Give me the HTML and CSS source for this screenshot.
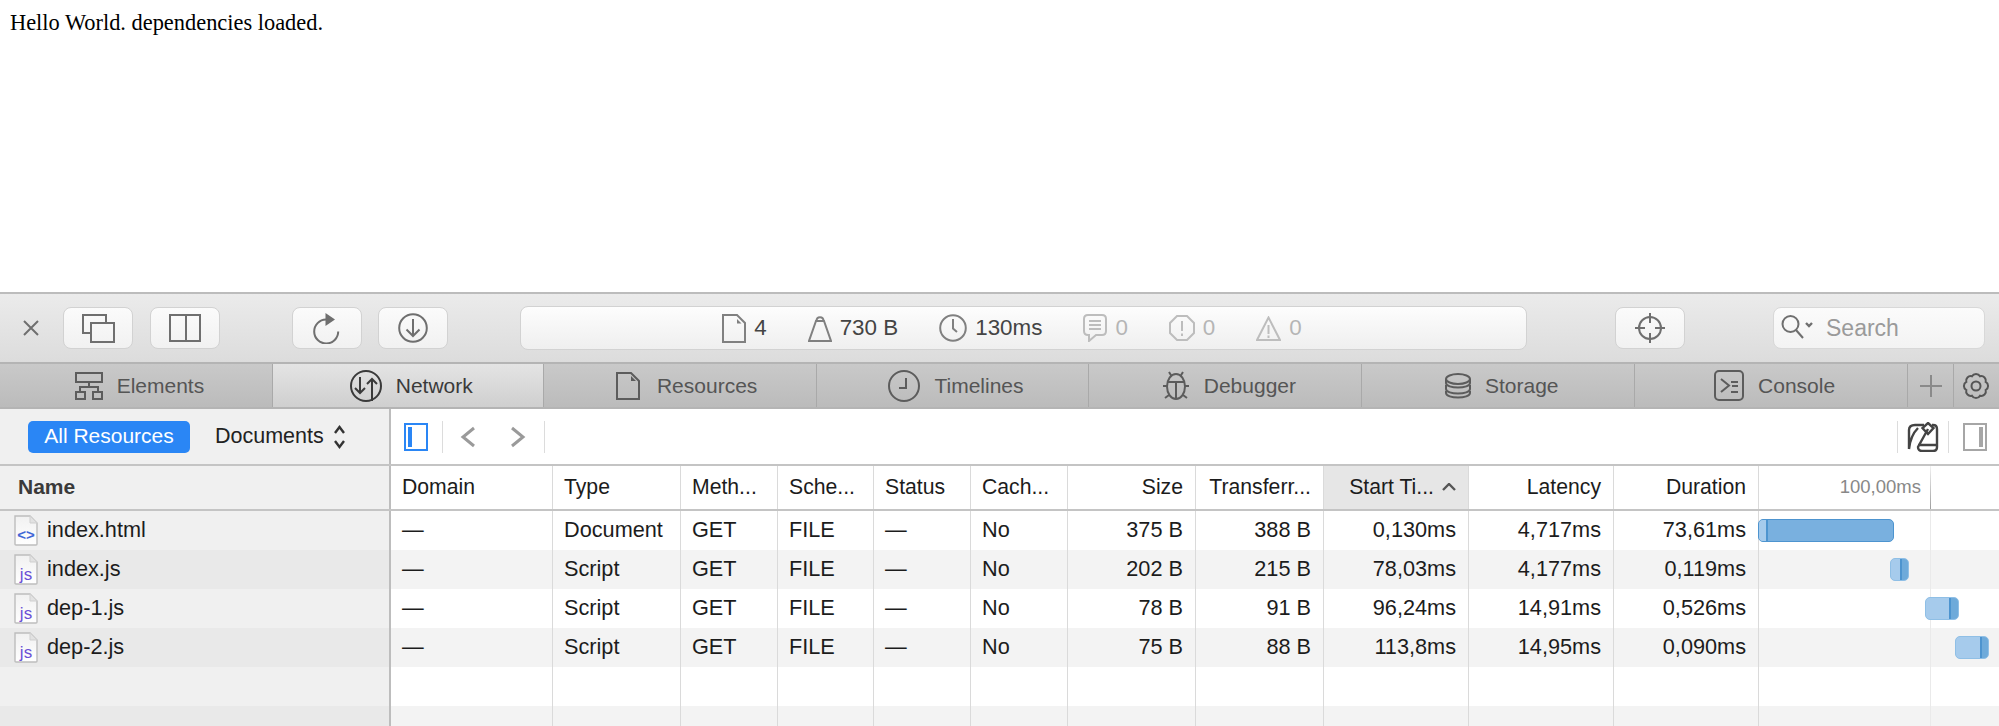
FILE: index.html
```html
<!DOCTYPE html>
<html lang="en">
<head>
    <meta charset="UTF-8">
    <title>Network</title>
    <link rel="stylesheet" href="styles.css">
</head>
<body>
    <div class="page">Hello World. dependencies loaded.</div>
    <div class="inspector">
        <div class="toolbar">
            <svg class="ico close" width="18" height="18" viewBox="0 0 18 18"><path d="M2 2 16 16M16 2 2 16"/></svg>
            <button class="tool first"><svg class="ico" width="33" height="29" viewBox="0 0 33 29"><path d="M9 19H1V1H24V9"/><path d="M9 9H32V28H9Z"/></svg></button>
            <button class="tool"><svg class="ico" width="32" height="28" viewBox="0 0 32 28"><path d="M1 1H31V27H1ZM17 1V27"/></svg></button>
            <button class="tool wide-gap"><svg class="ico" width="30" height="32" viewBox="0 0 30 32"><path d="M14 7.500A12 12 0 1 0 26.200 19.500"/><path class="fill" d="M13.500 1 23 7.500 13.500 14Z"/></svg></button>
            <button class="tool"><svg class="ico" width="30" height="30" viewBox="0 0 30 30"><circle cx="15" cy="15" r="13.800"/><path d="M15 6V23M8.500 16.500 15 23 21.500 16.500"/></svg></button>
            <div class="dashboard">
                <span class="stat"><svg class="ico" width="24" height="29" viewBox="0 0 24 29"><path d="M1 1H15L23 9V28H1Z"/><path class="fill thin" d="M15 5 19.500 9.500H15Z"/></svg>4</span>
                <span class="stat"><svg class="ico" width="24" height="27" viewBox="0 0 24 27"><path d="M8 6H16L23 26H1Z"/><path d="M8.500 6C8.500 1 15.500 1 15.500 6"/></svg>730 B</span>
                <span class="stat"><svg class="ico" width="28" height="28" viewBox="0 0 28 28"><circle cx="14" cy="14" r="12.800"/><path d="M14 5V14.500L18 18"/></svg>130ms</span>
                <span class="stat off"><svg class="ico" width="24" height="28" viewBox="0 0 24 28"><path d="M5 1H19Q23 1 23 5V17Q23 21 19 21H13L6 27V21H5Q1 21 1 17V5Q1 1 5 1Z"/><path d="M6 7H18M6 11H18M6 15H18"/></svg>0</span>
                <span class="stat off"><svg class="ico" width="26" height="26" viewBox="0 0 26 26"><path d="M8 1H18L25 8V18L18 25H8L1 18V8Z"/><path d="M13 6V16M13 18.500V21"/></svg>0</span>
                <span class="stat off"><svg class="ico" width="25" height="25" viewBox="0 0 25 25"><path d="M12.500 1.500 24 24H1Z"/><path d="M12.500 9V18M12.500 19.500V22"/></svg>0</span>
            </div>
            <button class="tool dash-gap"><svg class="ico" width="32" height="32" viewBox="0 0 32 32"><circle cx="16" cy="16" r="11"/><path d="M16 1V11M16 21V31M1 16H11M21 16H31"/></svg></button>
            <label class="search dash-gap">
                <svg class="ico" width="32" height="28" viewBox="0 0 32 28"><circle cx="9.500" cy="10" r="8"/><path d="M15 16 22 24"/><path class="thick" d="M25 9 28 12 31 9"/></svg>
                <span>Search</span>
            </label>
        </div>
        <div class="tabs">
            <div class="tab"><svg class="ico" width="28" height="28" viewBox="0 0 28 28"><path d="M1 1H27V10H1ZM14 10V15M5 20V15H23V20M1 20H10V27H1ZM18 20H27V27H18Z"/></svg>Elements</div>
            <div class="tab current"><svg class="ico" width="32" height="32" viewBox="0 0 32 32"><circle cx="16" cy="16" r="15"/><path d="M10 7V23M5 18 10 23 15 18M22 31V9M17 14 22 9 27 14"/></svg>Network</div>
            <div class="tab doc"><svg class="ico" width="24" height="28" viewBox="0 0 24 28"><path d="M1 1H15L23 9V27H1Z"/><path class="fill thin" d="M15 4 20 9H15Z"/></svg>Resources</div>
            <div class="tab"><svg class="ico" width="32" height="32" viewBox="0 0 32 32"><circle cx="16" cy="16" r="15"/><path d="M18 8V18H11"/></svg>Timelines</div>
            <div class="tab"><svg class="ico" width="28" height="30" viewBox="0 0 28 30"><ellipse cx="14" cy="15.500" rx="9" ry="12.500"/><path d="M5.500 11H22.500M14 11V28M7 1 9.500 5M21 1 18.500 5M1 15H5M23 15H27M3 27 7 24M25 27 21 24"/></svg>Debugger</div>
            <div class="tab"><svg class="ico" width="26" height="26" viewBox="0 0 26 26"><ellipse cx="13" cy="6" rx="12" ry="5"/><path d="M1 6V10C1 16 25 16 25 10V6M1 12V16C1 22 25 22 25 16V12M1 18V20C1 26 25 26 25 20V18"/></svg>Storage</div>
            <div class="tab"><svg class="ico" width="30" height="31" viewBox="0 0 30 31"><rect x="1" y="1" width="28" height="29" rx="4"/><path d="M7 9 15 15.500 7 22M17 12H24M18 16H24M17 22H24"/></svg>Console</div>
            <div class="tab-btn plus"><svg class="ico" width="24" height="24" viewBox="0 0 24 24"><path d="M12 1V23M1 12H23"/></svg></div>
            <div class="tab-btn"><svg class="ico" width="28" height="28" viewBox="2 2 28 28"><path d="M25.700 11.980A4.600 4.600 0 0 1 25.700 20.020A4.600 4.600 0 0 1 20.020 25.700A4.600 4.600 0 0 1 11.980 25.700A4.600 4.600 0 0 1 6.300 20.020A4.600 4.600 0 0 1 6.300 11.980A4.600 4.600 0 0 1 11.980 6.300A4.600 4.600 0 0 1 20.020 6.300A4.600 4.600 0 0 1 25.700 11.980Z"/><circle cx="16" cy="16" r="4.500"/></svg></div>
        </div>
        <div class="filter">
            <div class="filter-left">
                <span class="pill">All Resources</span>
                <span class="scope">Documents<svg class="ico" width="11" height="24" viewBox="0 0 11 24"><path class="thick" d="M1 8 5.500 2 10 8M1 16 5.500 22 10 16"/></svg></span>
            </div>
            <div class="filter-right">
                <svg class="ico blue" width="24" height="28" viewBox="0 0 24 28"><path d="M1 1H23V27H1Z"/><path class="fill" d="M4 4H8V24H4Z"/></svg>
                <i class="divider"></i>
                <svg class="ico nav" width="16" height="22" viewBox="0 0 16 22"><path d="M14 2 3 11 14 20"/></svg>
                <svg class="ico nav next" width="16" height="22" viewBox="0 0 16 22"><path d="M2 2 13 11 2 20"/></svg>
                <i class="divider"></i>
                <i class="push"></i>
                <i class="divider"></i>
                <svg class="ico dark" width="32" height="30" viewBox="0 0 32 30"><path d="M2 27V8Q2 3 8 3H17M25 3H26Q30 3 30 7V25Q30 29 26 29H15Q11 29 11 25L21 7M11 23H30M2 27C3 18 6 11 11 6"/><path d="M21 1 26.500 6 21 12 15.500 6Z"/></svg>
                <i class="divider"></i>
                <svg class="ico soft" width="24" height="28" viewBox="0 0 24 28"><path d="M1 1H23V27H1Z"/><path class="fill" d="M16 4H20V24H16Z"/></svg>
            </div>
        </div>
        <div class="grid">
            <div class="row head">
                <div class="cell name"><b>Name</b></div>
                <div class="cell">Domain</div>
                <div class="cell">Type</div>
                <div class="cell">Meth...</div>
                <div class="cell">Sche...</div>
                <div class="cell">Status</div>
                <div class="cell">Cach...</div>
                <div class="cell num">Size</div>
                <div class="cell num">Transferr...</div>
                <div class="cell num sorted">Start Ti...<svg class="ico" width="14" height="8" viewBox="0 0 14 8"><path class="thick" d="M1 7 7 1 13 7"/></svg></div>
                <div class="cell num">Latency</div>
                <div class="cell num">Duration</div>
                <div class="cell graph"><span class="tick">100,00ms</span><i class="grid-line"></i></div>
            </div>
            <div class="row">
                <div class="cell name"><svg class="file" width="24" height="31" viewBox="0 0 24 31"><use href="#file-doc"/><text class="mark html" x="12" y="25">&lt;&gt;</text></svg>index.html</div>
                <div class="cell">—</div>
                <div class="cell">Document</div>
                <div class="cell">GET</div>
                <div class="cell">FILE</div>
                <div class="cell">—</div>
                <div class="cell">No</div>
                <div class="cell num">375 B</div>
                <div class="cell num">388 B</div>
                <div class="cell num">0,130ms</div>
                <div class="cell num">4,717ms</div>
                <div class="cell num">73,61ms</div>
                <div class="cell graph"><i class="grid-line"></i><span class="bar lead" style="left:-1px;width:136px"><em style="width:9px"></em></span></div>
            </div>
            <div class="row">
                <div class="cell name"><svg class="file" width="24" height="31" viewBox="0 0 24 31"><use href="#file-doc"/><text class="mark js" x="12" y="26">js</text></svg>index.js</div>
                <div class="cell">—</div>
                <div class="cell">Script</div>
                <div class="cell">GET</div>
                <div class="cell">FILE</div>
                <div class="cell">—</div>
                <div class="cell">No</div>
                <div class="cell num">202 B</div>
                <div class="cell num">215 B</div>
                <div class="cell num">78,03ms</div>
                <div class="cell num">4,177ms</div>
                <div class="cell num">0,119ms</div>
                <div class="cell graph"><i class="grid-line"></i><span class="bar" style="left:131px;width:19px"><em style="width:8px"></em></span></div>
            </div>
            <div class="row">
                <div class="cell name"><svg class="file" width="24" height="31" viewBox="0 0 24 31"><use href="#file-doc"/><text class="mark js" x="12" y="26">js</text></svg>dep-1.js</div>
                <div class="cell">—</div>
                <div class="cell">Script</div>
                <div class="cell">GET</div>
                <div class="cell">FILE</div>
                <div class="cell">—</div>
                <div class="cell">No</div>
                <div class="cell num">78 B</div>
                <div class="cell num">91 B</div>
                <div class="cell num">96,24ms</div>
                <div class="cell num">14,91ms</div>
                <div class="cell num">0,526ms</div>
                <div class="cell graph"><i class="grid-line"></i><span class="bar" style="left:166px;width:34px"><em style="width:9px"></em></span></div>
            </div>
            <div class="row">
                <div class="cell name"><svg class="file" width="24" height="31" viewBox="0 0 24 31"><use href="#file-doc"/><text class="mark js" x="12" y="26">js</text></svg>dep-2.js</div>
                <div class="cell">—</div>
                <div class="cell">Script</div>
                <div class="cell">GET</div>
                <div class="cell">FILE</div>
                <div class="cell">—</div>
                <div class="cell">No</div>
                <div class="cell num">75 B</div>
                <div class="cell num">88 B</div>
                <div class="cell num">113,8ms</div>
                <div class="cell num">14,95ms</div>
                <div class="cell num">0,090ms</div>
                <div class="cell graph"><i class="grid-line"></i><span class="bar" style="left:196px;width:34px"><em style="width:8px"></em></span></div>
            </div>
            <div class="row">
                <div class="cell name"></div><div class="cell"></div><div class="cell"></div><div class="cell"></div><div class="cell"></div><div class="cell"></div><div class="cell"></div><div class="cell"></div><div class="cell"></div><div class="cell"></div><div class="cell"></div><div class="cell"></div><div class="cell graph"><i class="grid-line"></i></div>
            </div>
            <div class="row">
                <div class="cell name"></div><div class="cell"></div><div class="cell"></div><div class="cell"></div><div class="cell"></div><div class="cell"></div><div class="cell"></div><div class="cell"></div><div class="cell"></div><div class="cell"></div><div class="cell"></div><div class="cell"></div><div class="cell graph"><i class="grid-line"></i></div>
            </div>
        </div>
    </div>
    <svg class="defs" width="0" height="0">
        <defs>
            <linearGradient id="paper" x1="0" y1="0" x2="0" y2="1"><stop offset="0" stop-color="#f1f1f1"/><stop offset="1" stop-color="#ffffff"/></linearGradient>
            <symbol id="file-doc" viewBox="0 0 24 31">
                <path d="M1 1H16L23 8V29Q23 30 22 30H2Q1 30 1 29Z" fill="url(#paper)" stroke="#bdbdbd" stroke-width="1.400"/>
                <path d="M16 1 23 8H16Z" fill="#e2e2e2" stroke="#cfcfcf"/>
            </symbol>
        </defs>
    </svg>
</body>
</html>
```

FILE: styles.css
```css
html, body {
    margin: 0;
    padding: 0;
    height: 726px;
    overflow: hidden;
    background: #fff;
}
.page {
    height: 292px;
    box-sizing: border-box;
    padding: 10px;
    font: 22.400px/26px "Liberation Serif", serif;
    color: #000;
}
.inspector {
    font-family: "Liberation Sans", Arial, sans-serif;
    font-size: 21.700px;
    color: #222;
}
.defs {
    position: absolute;
}

/* icons */
.ico {
    fill: none;
    stroke: #6f6f6f;
    stroke-width: 2;
    flex: none;
}
.ico .fill {
    fill: currentColor;
    stroke: none;
}
.ico .thin {
    stroke: none;
}
.ico .thick {
    stroke-width: 2.400;
}

/* top toolbar */
.toolbar {
    height: 68px;
    display: flex;
    align-items: center;
    padding: 0 14px 0 22px;
    border-top: 2px solid #bcbcbc;
    border-bottom: 2px solid #b4b4b4;
    background: linear-gradient(#ebebeb, #dcdcdc);
    color: #6f6f6f;
}
.close {
    margin-right: 23px;
}
.tool {
    width: 70px;
    height: 42px;
    margin: 0 17px 0 0;
    padding: 0;
    border: 1px solid #d2d2d2;
    border-radius: 8px;
    background: linear-gradient(#fbfbfb, #f1f1f1);
    display: flex;
    align-items: center;
    justify-content: center;
    color: #6f6f6f;
}
.tool.wide-gap {
    margin-left: 55px;
    margin-right: 16px;
}
.tool.dash-gap {
    margin: 0 88px 0 88px;
}
.dashboard {
    flex: 1;
    height: 42px;
    margin-left: 55px;
    border: 1px solid #d2d2d2;
    border-radius: 8px;
    background: linear-gradient(#fdfdfd, #efefef);
    display: flex;
    align-items: center;
    justify-content: center;
    gap: 41px;
    padding-right: 23px;
    font-size: 22.400px;
    color: #444;
}
.stat {
    display: flex;
    align-items: center;
    gap: 8px;
}
.stat .ico {
    stroke: #808080;
    color: #808080;
}
.stat.off {
    color: #b5b5b5;
}
.stat.off .ico {
    stroke: #bdbdbd;
}
.search {
    width: 212px;
    height: 42px;
    box-sizing: border-box;
    border: 1px solid #d8d8d8;
    border-radius: 8px;
    background: linear-gradient(#fbfbfb, #f3f3f3);
    display: flex;
    align-items: center;
    padding-left: 7px;
    gap: 13px;
    font-size: 23px;
    color: #9a9a9a;
}

/* tab strip */
.tabs {
    height: 43px;
    display: flex;
    border-bottom: 2px solid #b4b4b4;
    background: #c2c2c2;
}
.tab {
    width: 273px;
    box-sizing: border-box;
    display: flex;
    align-items: center;
    justify-content: center;
    gap: 14px;
    padding-left: 7px;
    border-right: 1px solid #a9a9a9;
    background: linear-gradient(#c9c9c9, #bbbbbb);
    color: #555;
    font-size: 21px;
}
.tab.doc {
    gap: 17px;
    padding-left: 14px;
}
.tab .ico {
    stroke: #5c5c5c;
    color: #5c5c5c;
}
.tab.current {
    background: linear-gradient(#e4e4e4, #cfcfcf);
    color: #3a3a3a;
    width: 271px;
}
.tab.current .ico {
    stroke: #3a3a3a;
}
.tab-btn {
    width: 45px;
    display: flex;
    align-items: center;
    justify-content: center;
    border-right: 1px solid #a9a9a9;
    background: linear-gradient(#c9c9c9, #bbbbbb);
}
.tab-btn:last-child {
    border-right: 0;
}
.tab-btn .ico {
    stroke: #555;
}
.tab-btn.plus .ico {
    stroke: #8a8a8a;
}

/* filter row */
.filter {
    height: 55px;
    display: flex;
    border-bottom: 2px solid #c4c4c4;
    background: #fff;
}
.filter-left {
    width: 391px;
    box-sizing: border-box;
    flex: none;
    display: flex;
    align-items: center;
    padding-left: 28px;
    gap: 25px;
    background: #f0f0f0;
    border-right: 2px solid #bdbdbd;
}
.pill {
    width: 162px;
    height: 32px;
    line-height: 30px;
    text-align: center;
    border-radius: 5px;
    background: #2a86f5;
    color: #fff;
    font-size: 21px;
}
.scope {
    display: flex;
    align-items: center;
    gap: 10px;
    color: #222;
    font-size: 21.500px;
}
.scope .ico {
    stroke: #333;
}
.filter-right {
    flex: 1;
    display: flex;
    align-items: center;
    padding: 0 12px 0 13px;
}
.filter-right .ico.blue {
    stroke: #2a86f5;
    color: #2a86f5;
}
.filter-right .ico.nav {
    stroke: #9a9a9a;
    stroke-width: 3;
    margin-left: 17px;
}
.filter-right .ico.next {
    margin-left: 34px;
}
.filter-right .ico.dark {
    stroke: #444;
    stroke-width: 2.400;
    margin: 0 9px;
}
.filter-right .ico.soft {
    stroke: #a6a6a6;
    color: #a6a6a6;
    margin-left: 14px;
}
.divider {
    width: 1px;
    height: 32px;
    background: #dcdcdc;
    margin-left: 14px;
}
.filter-right .nav.next + .divider {
    margin-left: 18px;
}
.filter-right .dark + .divider {
    margin-left: 0;
}
.push {
    flex: 1;
}
.filter-right .push + .divider {
    margin-left: 0;
}

/* network table */
.grid {
    height: 260px;
    overflow: hidden;
}
.row {
    height: 39px;
    display: grid;
    grid-template-columns: 391px 162px 128px 97px 96px 97px 97px 128px 128px 145px 145px 145px 240px;
    background: #fff;
    line-height: 24px;
}
.row:nth-child(odd) {
    background: #f3f3f3;
}
.row.head {
    height: 43px;
    background: #fff;
    border-bottom: 2px solid #c4c4c4;
    font-size: 21.200px;
}
.cell {
    box-sizing: border-box;
    padding: 0 12px 2px 11px;
    display: flex;
    align-items: center;
    gap: 8px;
    border-right: 1px solid #dadada;
    white-space: nowrap;
    overflow: hidden;
    color: #1c1c1c;
}
.cell.num {
    justify-content: flex-end;
}
.cell.sorted {
    background: #e6e6e6;
}
.cell.sorted .ico {
    stroke: #555;
}
.name {
    background: #f0f0f0;
    border-right: 2px solid #bdbdbd;
    padding-left: 14px;
    gap: 9px;
}
.row:nth-child(odd) .name {
    background: #e9e9e9;
}
.row.head .name {
    background: #f0f0f0;
    padding-left: 18px;
}
.name b {
    font-size: 21px;
    color: #3a3a3a;
}
.file {
    flex: none;
    margin-top: 2px;
}
.mark {
    text-anchor: middle;
    font-family: "Liberation Sans", sans-serif;
}
.mark.html {
    font-size: 15px;
    font-weight: bold;
    fill: #3f66d6;
}
.mark.js {
    font-size: 17px;
    fill: #6a4fd6;
}
.graph {
    position: relative;
    border-right: 0;
    overflow: visible;
    justify-content: flex-end;
    padding-right: 78px;
}
.tick {
    font-size: 18.500px;
    color: #888;
}
.grid-line {
    position: absolute;
    left: 171px;
    top: 0;
    bottom: 0;
    width: 1px;
    background: #eaeaea;
}
.head .grid-line {
    background: linear-gradient(#f2f2f2, #9e9e9e);
}
.bar {
    position: absolute;
    top: 8px;
    height: 23px;
    box-sizing: border-box;
    display: flex;
    justify-content: flex-end;
    border: 1px solid #8fbfe6;
    border-radius: 5px;
    background: #a6cbec;
    overflow: hidden;
}
.bar em {
    display: block;
    box-sizing: border-box;
    background: #6eaada;
    border-left: 2px solid #4d94cf;
}
.bar.lead {
    justify-content: flex-start;
    background: #79b0df;
    border-color: #4d94cf;
}
.bar.lead em {
    background: #a6cbec;
    border-left: 0;
    border-right: 2px solid #4d94cf;
}
```
